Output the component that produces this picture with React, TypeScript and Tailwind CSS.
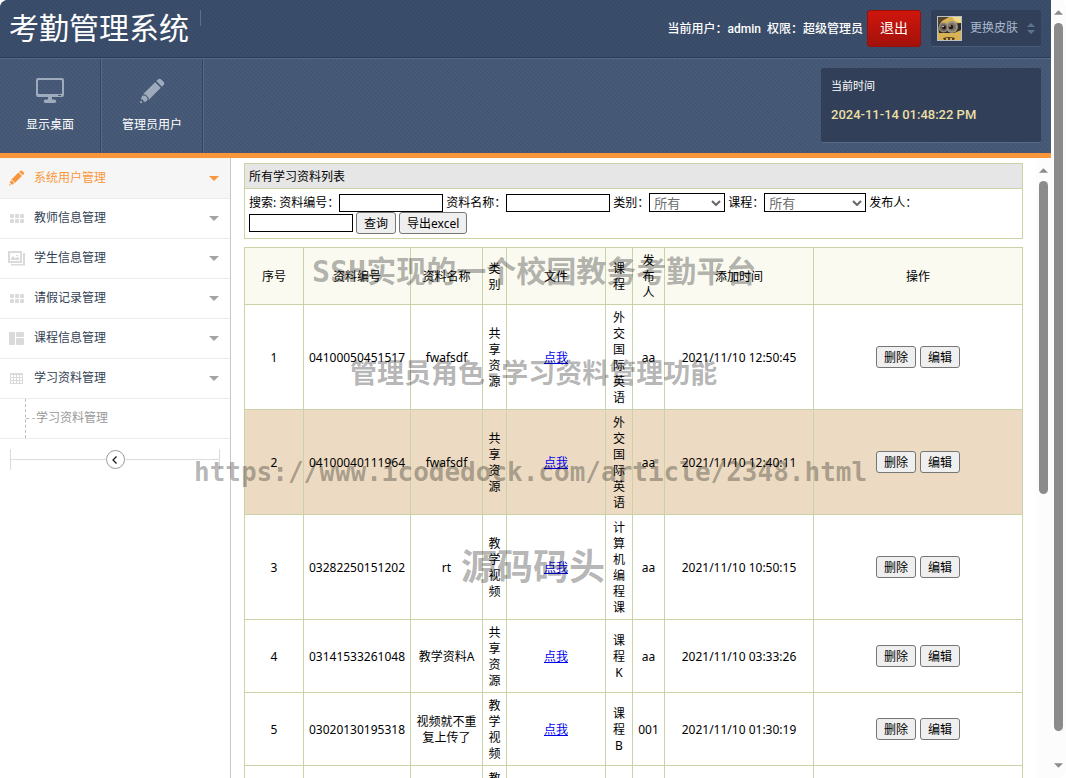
import type { ReactNode } from "react";
import clsx from "clsx";

type Material = {
  id: number;
  code: string;
  name: string;
  kind: string;
  course: string;
  publisher: string;
  addedAt: string;
};

type MenuItem = {
  label: string;
  icon: ReactNode;
  active?: boolean;
};

const materials: Material[] = [
  { id: 1, code: "04100050451517", name: "fwafsdf", kind: "共享资源", course: "外交国际英语", publisher: "aa", addedAt: "2021/11/10 12:50:45" },
  { id: 2, code: "04100040111964", name: "fwafsdf", kind: "共享资源", course: "外交国际英语", publisher: "aa", addedAt: "2021/11/10 12:40:11" },
  { id: 3, code: "03282250151202", name: "rt", kind: "教学视频", course: "计算机编程课", publisher: "aa", addedAt: "2021/11/10 10:50:15" },
  { id: 4, code: "03141533261048", name: "教学资料A", kind: "共享资源", course: "课程K", publisher: "aa", addedAt: "2021/11/10 03:33:26" },
  { id: 5, code: "03020130195318", name: "视频就不重复上传了", kind: "教学视频", course: "课程B", publisher: "001", addedAt: "2021/11/10 01:30:19" },
];

const hoveredId = 2;

const columns = ["序号", "资料编号", "资料名称", "类别", "文件", "课程", "发布人", "添加时间", "操作"];

function PencilIcon({ className }: { className: string }) {
  return (
    <svg viewBox="0 0 24 24" className={className} fill="currentColor" aria-hidden="true">
      <path d="M17.3 1.5a2.4 2.4 0 0 1 3.4 0l1.8 1.8a2.4 2.4 0 0 1 0 3.4l-1.3 1.3-5.2-5.2z" />
      <path d="M14.9 3.9l5.2 5.2L8.9 20.3a3.4 3.4 0 0 0-1.5-3.7 3.4 3.4 0 0 0-3.7-1.5z" />
      <path d="M2.9 16.4a3.6 3.6 0 0 1 4.7 4.7l-3.2 1.2a2.6 2.6 0 0 0-2.7-2.7z" />
      <path d="M1.3 20.9a1.8 1.8 0 0 1 1.8 1.8l-2.1.6z" />
    </svg>
  );
}

function MonitorIcon() {
  return (
    <svg viewBox="0 0 28 26" className="h-[26px] w-7 text-[#9eabbd]" fill="currentColor" aria-hidden="true">
      <path fillRule="evenodd" d="M2 0h24a2 2 0 0 1 2 2v15a2 2 0 0 1-2 2H2a2 2 0 0 1-2-2V2a2 2 0 0 1 2-2zm1 2a1 1 0 0 0-1 1v12a1 1 0 0 0 1 1h22a1 1 0 0 0 1-1V3a1 1 0 0 0-1-1z" />
      <path d="M12 19h4v2.500h2.500a1.700 1.700 0 0 1 0 3.500h-9a1.700 1.700 0 0 1 0-3.500H12z" />
      <rect x="22" y="17" width="3" height="1" fill="#41536f" />
    </svg>
  );
}

function GridIcon() {
  return (
    <svg viewBox="0 0 17 15" className="h-[15px] w-[17px]" fill="#dadada" aria-hidden="true">
      {[2, 7, 12].map((x) => (
        <g key={x}>
          <rect x={x} y="3" width="4" height="4" rx="1" />
          <rect x={x} y="8" width="4" height="4" rx="1" />
        </g>
      ))}
    </svg>
  );
}

function PicturesIcon() {
  return (
    <svg viewBox="0 0 17 15" className="h-[15px] w-[17px]" fill="#dadada" aria-hidden="true">
      <path fillRule="evenodd" d="M0 0h14v12H0zm2 2v8h10V2z" />
      <path d="M3 9V7l2-2 2 2 3-1 1 1v2zM8 4h2v1H8z" />
      <path d="M15 2h2v12.500H3V13h12z" />
    </svg>
  );
}

function PanelsIcon() {
  return (
    <svg viewBox="0 0 17 15" className="h-[15px] w-[17px]" fill="#dadada" aria-hidden="true">
      <rect x="1" y="1" width="6" height="13" rx="1" />
      <rect x="8" y="1" width="8" height="5" rx="1" />
      <rect x="8" y="7" width="8" height="7" rx="1" />
    </svg>
  );
}

function CalendarIcon() {
  return (
    <svg viewBox="0 0 17 15" className="h-[15px] w-[17px]" aria-hidden="true">
      <rect x="2" y="2" width="13" height="11" fill="#dadada" />
      <g fill="#fff">
        {[3, 6, 9, 12].map((x) => [4, 7, 10].map((y) => <rect key={`${x}-${y}`} x={x} y={y} width="2" height="2" />))}
      </g>
    </svg>
  );
}

function Avatar() {
  return (
    <svg viewBox="0 0 25 25" className="h-[25px] w-[25px]" aria-hidden="true">
      <rect width="25" height="25" fill="#b9bfc7" />
      <rect x="1" y="1" width="23" height="23" fill="#d9b254" />
      <path d="M1 1h11L5 5 1 11z" fill="#54452a" />
      <path d="M15 1h9v6l-6-2z" fill="#f0d98b" />
      <path d="M1 9l23-2v7l-7 3H2z" fill="#2e2a26" />
      <circle cx="6.500" cy="11.500" r="5" fill="#8b867b" />
      <circle cx="15" cy="11" r="6" fill="#97928a" />
      <circle cx="6.500" cy="11.500" r="3.500" fill="#6e675c" />
      <circle cx="15" cy="11" r="4" fill="#7a7366" />
      <circle cx="7" cy="11.500" r="2" fill="#24180f" />
      <circle cx="14" cy="11" r="2.300" fill="#24180f" />
      <circle cx="6" cy="10.500" r="0.800" fill="#e9e4da" />
      <circle cx="13" cy="10" r="0.800" fill="#e9e4da" />
      <path d="M6 22q6-2 12 0l-1 2H7z" fill="#5b4120" />
      <path d="M9 22h2v2H9zM13 22h2v2h-2z" fill="#d9b254" />
    </svg>
  );
}

const menu: MenuItem[] = [
  { label: "系统用户管理", icon: <PencilIcon className="h-4 w-[17px]" />, active: true },
  { label: "教师信息管理", icon: <GridIcon /> },
  { label: "学生信息管理", icon: <PicturesIcon /> },
  { label: "请假记录管理", icon: <GridIcon /> },
  { label: "课程信息管理", icon: <PanelsIcon /> },
  { label: "学习资料管理", icon: <CalendarIcon /> },
];

function Arrow({ className, up = false }: { className: string; up?: boolean }) {
  return (
    <svg viewBox="0 0 10 5" className={className} fill="currentColor" aria-hidden="true">
      <path d={up ? "M0 5L5 0l5 5z" : "M0 0h10L5 5z"} />
    </svg>
  );
}

function Header() {
  return (
    <header className="shrink-0 border-b-[5px] border-[#f9963b] bg-[#465876] text-white">
      <div className="border-b border-[#2c3e57] bg-[repeating-linear-gradient(45deg,#3b4e6b_0px,#3b4e6b_1px,#364864_2px,#3b4e6b_3px)]">
        <div className="flex h-[57px] items-center justify-between pr-[10px] pl-[9px]">
          <div className="flex items-start gap-[11px]">
            <h1 className="text-[30px] leading-[38px]">考勤管理系统</h1>
            <span className="h-4 w-px bg-[#5d6f8a]" />
          </div>
          <div className="flex items-center">
            <p className="mr-1 text-xs font-medium whitespace-pre">当前用户：admin  权限：超级管理员</p>
            <button type="button" className="h-[37px] w-[54px] rounded-[3px] border border-[#971009] bg-linear-to-b from-[#cf160d] to-[#a3110b] pb-px text-sm">
              退出
            </button>
            <button type="button" className="ml-[10px] flex h-[37px] w-[110px] items-center rounded-[2px] border-b border-[#4a5c79] bg-[#314058] pl-[6px] text-xs text-[#a9b8cd]">
              <Avatar />
              <span className="ml-2">更换皮肤</span>
              <span className="ml-[9px] flex flex-col gap-[3px] text-[#5e7390]">
                <Arrow up className="h-1 w-2" />
                <Arrow className="h-1 w-2" />
              </span>
            </button>
          </div>
        </div>
      </div>
      <div className="flex h-[95px] justify-between border-t border-[#55688a] bg-[repeating-linear-gradient(45deg,#485b79_0px,#485b79_1px,#41536f_2px,#485b79_3px)]">
        <nav className="flex text-xs">
          <a href="#desktop" className="flex w-[101px] flex-col items-center border-r border-[#34465f] pt-[19px]">
            <MonitorIcon />
            <span className="mt-[11px] leading-5">显示桌面</span>
          </a>
          <a href="#admins" className="flex w-[102px] flex-col items-center border-r border-l border-[#34465f] border-l-[#566986] pt-[19px]">
            <PencilIcon className="h-[26px] w-[26px] text-[#9eabbd]" />
            <span className="mt-[11px] leading-5">管理员用户</span>
          </a>
          <span className="w-px bg-[#566986]" />
        </nav>
        <div className="mt-[9px] mr-[10px] h-[75px] w-[220px] rounded-[2px] border-b border-[#566986] bg-[#314058] px-[10px] pt-[9px]">
          <p className="text-[11px] leading-5">当前时间</p>
          <p className="mt-2 text-[13px] leading-5 font-medium text-[#ecdfa4]">2024-11-14 01:48:22 PM</p>
        </div>
      </div>
    </header>
  );
}

function Sidebar() {
  return (
    <aside className="w-[231px] shrink-0 border-r border-[#c9c9c9] text-xs text-[#333f55]">
      <ul>
        {menu.map((item) => (
          <li key={item.label}>
            <a
              href="#menu"
              className={clsx(
                "flex items-center border-b border-[#ececec] pr-[11px] pl-2",
                item.active ? "h-[41px] bg-[#f6f6f6] text-[#f9963b]" : "h-10",
              )}
            >
              {item.icon}
              <span className={clsx("ml-[9px] flex-1", !item.active && "pb-[2px]")}>{item.label}</span>
              <Arrow className={clsx("h-[5px] w-[10px]", item.active ? "text-[#f9963b]" : "text-[#a3a3a3]")} />
            </a>
          </li>
        ))}
        <li className="border-b border-[#ececec] pl-[25px]">
          <a href="#materials" className="flex h-[39px] items-center border-l border-dashed border-[#bdbdbd] text-[#999999]">
            <span className="mr-px w-[9px] border-t border-dashed border-[#bdbdbd]" />
            <span className="pb-[2px]">学习资料管理</span>
          </a>
        </li>
      </ul>
      <div className="mx-[10px] mt-[10px] flex h-[21px] items-center border-x border-[#dcdcdc]">
        <span className="h-px flex-1 bg-[#dcdcdc]" />
        <button type="button" aria-label="收起菜单" className="flex h-[19px] w-[19px] items-center justify-center rounded-full border border-[#9c9c9c] bg-white">
          <svg viewBox="0 0 8 8" className="h-2 w-2" fill="none" stroke="#111" strokeWidth="1.2" aria-hidden="true">
            <path d="M5.500 0.500L2 4l3.500 3.500" />
          </svg>
        </button>
        <span className="h-px flex-1 bg-[#dcdcdc]" />
      </div>
    </aside>
  );
}

const inputStyle = "h-[18px] w-[104px] border border-black bg-white px-1 outline-none";
const buttonStyle = "h-[22px] rounded-[3px] border border-[#767676] bg-[#efefef] px-[7px] pt-px leading-4 whitespace-nowrap";
const cellStyle = "border border-[#cad2a8] px-1 pt-[5px] pb-[3px]";

function FilterSelect({ id, className }: { id: string; className: string }) {
  return (
    <span className="relative flex">
      <select id={id} className={clsx("h-[19px] appearance-none border border-black bg-white pl-1 text-[13px] leading-4 text-[#6d6d6d]", className)}>
        <option>所有</option>
      </select>
      <svg viewBox="0 0 10 6" className="pointer-events-none absolute top-[7px] right-1 h-[6px] w-[10px]" fill="none" stroke="#666" strokeWidth="2" aria-hidden="true">
        <path d="M1 1l4 4 4-4" />
      </svg>
    </span>
  );
}

function SearchPanel() {
  return (
    <section className="border border-[#cad2a8]">
      <h2 className="flex h-[25px] items-center border-b border-[#cad2a8] bg-[#e6e6e6] px-1 pt-[2px]">所有学习资料列表</h2>
      <form className="flex flex-wrap items-center gap-x-[3px] p-1">
        <span>搜索:</span>
        <span className="flex items-center">
          <label htmlFor="code">资料编号：</label>
          <input id="code" className={inputStyle} />
        </span>
        <span className="flex items-center">
          <label htmlFor="name">资料名称：</label>
          <input id="name" className={inputStyle} />
        </span>
        <span className="flex items-center">
          <label htmlFor="kind">类别：</label>
          <FilterSelect id="kind" className="w-[76px]" />
        </span>
        <span className="flex items-center">
          <label htmlFor="course">课程：</label>
          <FilterSelect id="course" className="w-[102px]" />
        </span>
        <label htmlFor="publisher">发布人：</label>
        <input id="publisher" className={inputStyle} />
        <button type="button" className={buttonStyle}>查询</button>
        <button type="button" className={buttonStyle}>导出excel</button>
      </form>
    </section>
  );
}

function MaterialTable() {
  return (
    <table className="mt-2 w-full table-fixed border-collapse text-center">
      <colgroup>
        <col className="w-[59px]" />
        <col className="w-[107px]" />
        <col className="w-[72px]" />
        <col className="w-[24px]" />
        <col className="w-[99px]" />
        <col className="w-[27px]" />
        <col className="w-[32px]" />
        <col className="w-[149px]" />
        <col />
      </colgroup>
      <thead>
        <tr className="bg-[#fafaf1]">
          {columns.map((column) => (
            <th key={column} className={clsx(cellStyle, "font-normal")}>{column}</th>
          ))}
        </tr>
      </thead>
      <tbody>
        {materials.map((row) => (
          <tr key={row.id} className={clsx(row.id === hoveredId && "bg-[#ecdbc2]")}>
            <td className={cellStyle}>{row.id}</td>
            <td className={cellStyle}>{row.code}</td>
            <td className={cellStyle}>{row.name}</td>
            <td className={cellStyle}>{row.kind}</td>
            <td className={cellStyle}>
              <a href="#file" className="text-[#0000ee] underline">点我</a>
            </td>
            <td className={cellStyle}>{row.course}</td>
            <td className={cellStyle}>{row.publisher}</td>
            <td className={cellStyle}>{row.addedAt}</td>
            <td className="border border-[#cad2a8] p-1">
              <div className="flex justify-center gap-1">
                <button type="button" className={buttonStyle}>删除</button>
                <button type="button" className={buttonStyle}>编辑</button>
              </div>
            </td>
          </tr>
        ))}
        <tr>
          <td className={cellStyle} />
          <td className={cellStyle} />
          <td className={cellStyle} />
          <td className={cellStyle}>教学视频</td>
          <td className={cellStyle} />
          <td className={cellStyle} />
          <td className={cellStyle} />
          <td className={cellStyle} />
          <td className={cellStyle} />
        </tr>
      </tbody>
    </table>
  );
}

function Watermark() {
  return (
    <div className="pointer-events-none absolute inset-0 font-['DejaVu_Sans_Mono','Noto_Sans_CJK_SC',monospace] font-bold whitespace-nowrap text-black/30">
      <p className="absolute top-[252px] left-[312px] text-[30px] leading-10">SSH实现的一个校园教务考勤平台</p>
      <p className="absolute top-[354px] left-[350px] text-[27px] leading-10">管理员角色-学习资料管理功能</p>
      <p className="absolute top-[452px] left-[194px] text-[26px] leading-10">https://www.icodedock.com/article/2348.html</p>
      <p className="absolute top-[548px] left-[461px] text-[36px] leading-10">源码码头</p>
    </div>
  );
}

export default function App() {
  return (
    <div className="relative flex h-screen overflow-hidden rounded-lg bg-white font-['Noto_Sans','Noto_Sans_CJK_SC',sans-serif] text-xs leading-4 text-black">
      <div className="flex min-w-0 flex-1 flex-col">
        <div className="font-[Roboto,'Noto_Sans_CJK_SC',sans-serif]">
          <Header />
        </div>
        <div className="flex min-h-0 flex-1">
          <Sidebar />
          <main className="min-w-0 flex-1 overflow-hidden px-[13px] pt-[5px]">
            <SearchPanel />
            <MaterialTable />
          </main>
          <div className="flex w-[15px] shrink-0 flex-col items-center bg-[#fcfcfc] pt-[10px] text-[#8b8b8b]">
            <Arrow up className="h-[5px] w-[9px]" />
            <span className="mt-2 h-[313px] w-[9px] rounded-full bg-[#8b8b8b]" />
          </div>
        </div>
      </div>
      <div className="flex w-[15px] shrink-0 flex-col items-center bg-[#fcfcfc] pt-[10px] pb-[10px] text-[#8b8b8b]">
        <Arrow up className="h-[5px] w-[9px]" />
        <span className="mt-2 mb-8 w-[9px] flex-1 rounded-full bg-[#8b8b8b]" />
        <Arrow className="h-[5px] w-[9px]" />
      </div>
      <Watermark />
    </div>
  );
}
